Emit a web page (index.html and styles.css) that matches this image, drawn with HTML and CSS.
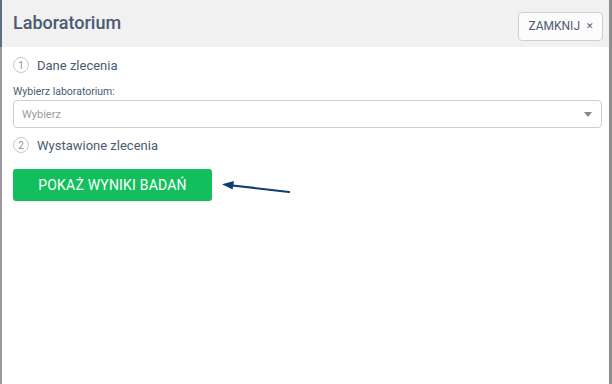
FILE: index.html
```html
<!DOCTYPE html>
<html lang="pl">
<head>
  <meta charset="UTF-8" />
  <title>Laboratorium</title>
  <link rel="stylesheet" href="styles.css">
</head>
<body>
  <div class="modal">
    <header class="modal-header">
      <h1 class="modal-title">Laboratorium</h1>
      <button class="close-btn" type="button">ZAMKNIJ <span class="close-x">&#x2715;</span></button>
    </header>
    <div class="modal-body">
      <div class="step">
        <span class="step-num">1</span>
        <span class="step-label">Dane zlecenia</span>
      </div>
      <div class="field">
        <label class="field-label">Wybierz laboratorium:</label>
        <div class="select">
          <span class="select-placeholder">Wybierz</span>
          <span class="caret"></span>
        </div>
      </div>
      <div class="step">
        <span class="step-num">2</span>
        <span class="step-label">Wystawione zlecenia</span>
      </div>
      <div class="action-row">
        <button class="results-btn" type="button">POKAŻ WYNIKI BADAŃ</button>
        <svg class="arrow" width="70" height="14" viewBox="0 0 70 14">
          <line x1="6" y1="4" x2="67" y2="11" stroke="#0e3d78" stroke-width="2.2" stroke-linecap="round" />
          <polygon points="0,3.3 12,0 10.6,8.4" fill="#0e3d78" />
        </svg>
      </div>
    </div>
  </div>
</body>
</html>
```
FILE: styles.css
```css
html, body {
  height: 100%;
  margin: 0;
  padding: 0;
}
body {
  font-family: Roboto, "Liberation Sans", sans-serif;
  background: #ffffff;
}
.modal {
  height: 100%;
  box-sizing: border-box;
  border-left: 2px solid #9a98a0;
  border-right: 3px solid #8e8e8e;
  background: #ffffff;
}
.modal-header {
  height: 47px;
  background: #f1f1f1;
  display: flex;
  align-items: center;
  justify-content: space-between;
  padding: 0 6px 0 11px;
  margin-left: -2px;
  border-left: 2px solid #5d6d86;
}
.modal-title {
  margin: 0 0 2px 0;
  font-size: 18px;
  font-weight: 500;
  color: #4b5a70;
}
.close-btn {
  height: 29px;
  margin-top: 5px;
  padding: 0 8px 0 9px;
  background: #fcfcfc;
  border: 1px solid #c9ced9;
  border-radius: 4px;
  font-family: inherit;
  font-size: 12px;
  color: #4b5a70;
  display: flex;
  align-items: center;
  gap: 6px;
}
.close-x {
  font-size: 9px;
}
.modal-body {
  padding: 10px 7px 0 11px;
}
.step {
  display: flex;
  align-items: center;
  gap: 8px;
  height: 16px;
}
.step-num {
  width: 14px;
  height: 14px;
  border: 1px solid #c4c8cf;
  border-radius: 50%;
  font-size: 10px;
  color: #8a909a;
  display: flex;
  align-items: center;
  justify-content: center;
}
.step-label {
  font-size: 13px;
  color: #4b5a70;
}
.field {
  margin-top: 13px;
  margin-bottom: 9px;
}
.field-label {
  display: block;
  font-size: 10.5px;
  line-height: 12px;
  color: #4b5a70;
  margin-bottom: 2px;
}
.select {
  height: 26px;
  border: 1px solid #cfcfcf;
  border-radius: 4px;
  display: flex;
  align-items: center;
  justify-content: space-between;
  padding: 0 9px 0 8px;
}
.select-placeholder {
  font-size: 11px;
  color: #9c9c9c;
}
.caret {
  width: 0;
  height: 0;
  border-left: 4.5px solid transparent;
  border-right: 4.5px solid transparent;
  border-top: 5px solid #888888;
}
.action-row {
  display: flex;
  align-items: center;
  margin-top: 16px;
}
.results-btn {
  width: 199px;
  height: 32px;
  background: #12bf5c;
  border: none;
  border-radius: 3px;
  color: #ffffff;
  font-family: inherit;
  font-size: 14px;
  letter-spacing: 0.2px;
}
.arrow {
  margin-left: 10px;
  margin-top: 5px;
}
```
